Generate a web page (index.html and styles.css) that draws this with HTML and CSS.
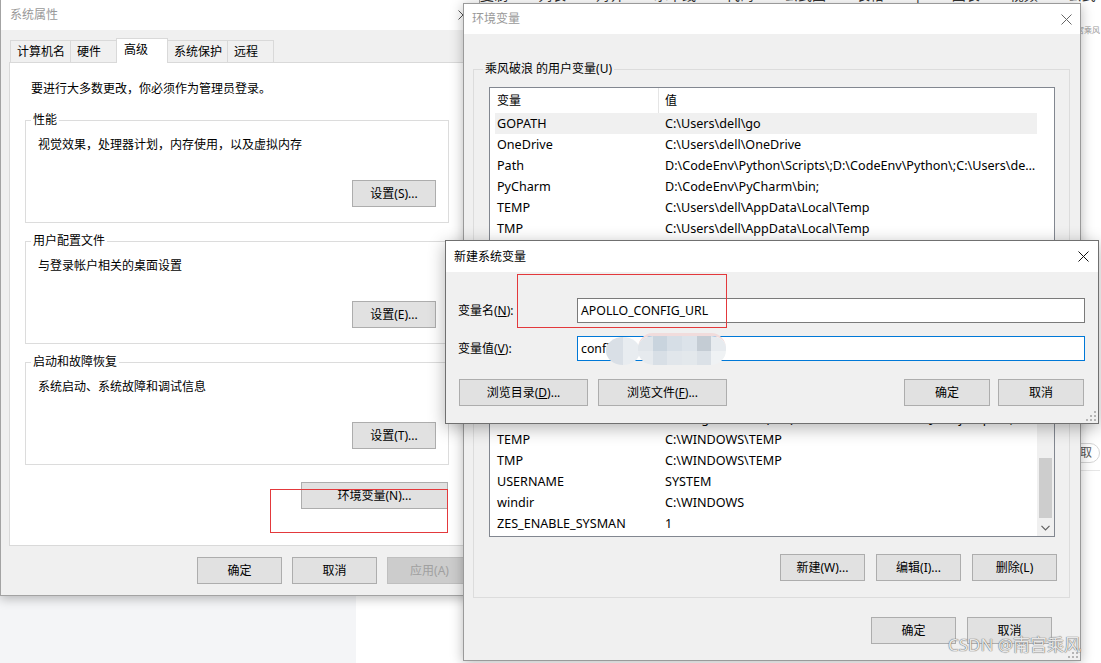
FILE: index.html
```html
<!DOCTYPE html>
<html lang="zh-CN">
<head>
<meta charset="utf-8">
<title>环境变量</title>
<link rel="stylesheet" href="styles.css">
</head>
<body>
<div class="desktop">
  <div class="backdrop-top">
    <span>复制</span><span>列表</span><span>对齐</span><span>水平线</span><span>代码</span><span>公式图</span><span>表格</span><span>|</span><span>图表</span><span>视频</span><span>公式</span><span>链接</span>
  </div>
  <div class="backdrop-bottom-left"></div>
  <div class="backdrop-right">
    <span class="mini-mark">南宫乘风</span>
    <span class="pill">获取</span>
    <span class="hr"></span>
  </div>

  <section class="win win-sys">
    <header class="titlebar inactive">
      <span class="title">系统属性</span>
      <span class="close"><svg width="10" height="10" viewBox="0 0 10 10"><path d="M0.5 0.5L9.5 9.5M9.5 0.5L0.5 9.5" stroke="#555" stroke-width="1" fill="none"/></svg></span>
    </header>
    <div class="sys-body">
      <nav class="tabs">
        <span class="tab">计算机名</span>
        <span class="tab">硬件</span>
        <span class="tab active">高级</span>
        <span class="tab">系统保护</span>
        <span class="tab">远程</span>
      </nav>
      <div class="tab-panel">
        <p class="note">要进行大多数更改，你必须作为管理员登录。</p>
        <fieldset class="sys-group">
          <legend>性能</legend>
          <div class="group-inner">
            <p class="desc">视觉效果，处理器计划，内存使用，以及虚拟内存</p>
            <button class="btn btn-set">设置(S)...</button>
          </div>
        </fieldset>
        <fieldset class="sys-group">
          <legend>用户配置文件</legend>
          <div class="group-inner">
            <p class="desc">与登录帐户相关的桌面设置</p>
            <button class="btn btn-set">设置(E)...</button>
          </div>
        </fieldset>
        <fieldset class="sys-group">
          <legend>启动和故障恢复</legend>
          <div class="group-inner">
            <p class="desc">系统启动、系统故障和调试信息</p>
            <button class="btn btn-set">设置(T)...</button>
          </div>
        </fieldset>
        <div class="env-row"><button class="btn btn-env">环境变量(N)...</button></div>
      </div>
      <div class="sys-footer">
        <button class="btn">确定</button>
        <button class="btn">取消</button>
        <button class="btn" disabled>应用(A)</button>
      </div>
    </div>
    <div class="mark-box mark-env"></div>
  </section>

  <section class="win win-env">
    <header class="titlebar inactive">
      <span class="title">环境变量</span>
      <span class="close"><svg width="11" height="11" viewBox="0 0 11 11"><path d="M0.5 0.5L10.5 10.5M10.5 0.5L0.5 10.5" stroke="#666" stroke-width="1" fill="none"/></svg></span>
    </header>
    <div class="env-body">
      <fieldset class="env-group">
        <legend>乘风破浪 的用户变量(U)</legend>
        <div class="group-inner">
          <div class="listbox user-list">
            <div class="list-main">
              <div class="list-head"><span class="c1">变量</span><span class="c2">值</span></div>
              <div class="list-body">
                <div class="row sel"><span class="c1">GOPATH</span><span class="c2">C:\Users\dell\go</span></div>
                <div class="row"><span class="c1">OneDrive</span><span class="c2">C:\Users\dell\OneDrive</span></div>
                <div class="row"><span class="c1">Path</span><span class="c2">D:\CodeEnv\Python\Scripts\;D:\CodeEnv\Python\;C:\Users\dell\AppData\Local\Microsoft\WindowsApps;</span></div>
                <div class="row"><span class="c1">PyCharm</span><span class="c2">D:\CodeEnv\PyCharm\bin;</span></div>
                <div class="row"><span class="c1">TEMP</span><span class="c2">C:\Users\dell\AppData\Local\Temp</span></div>
                <div class="row"><span class="c1">TMP</span><span class="c2">C:\Users\dell\AppData\Local\Temp</span></div>
              </div>
            </div>
            <div class="vscroll"></div>
          </div>
          <div class="btn-row">
            <button class="btn">新建(N)...</button>
            <button class="btn">编辑(E)...</button>
            <button class="btn">删除(D)</button>
          </div>
        </div>
      </fieldset>
      <fieldset class="env-group">
        <legend>系统变量(S)</legend>
        <div class="group-inner">
          <div class="listbox sys-list">
            <div class="list-main">
              <div class="list-head"><span class="c1">变量</span><span class="c2">值</span></div>
              <div class="list-body">
                <div class="row"><span class="c1">NUMBER_OF_PROCESSORS</span><span class="c2">8</span></div>
                <div class="row"><span class="c1">OS</span><span class="c2">Windows_NT</span></div>
                <div class="row"><span class="c1">Path</span><span class="c2">C:\Program Files (x86)\Common Files\Oracle\Java\javapath;C:\WINDOWS\system32;C:\WINDOWS;</span></div>
                <div class="row"><span class="c1">TEMP</span><span class="c2">C:\WINDOWS\TEMP</span></div>
                <div class="row"><span class="c1">TMP</span><span class="c2">C:\WINDOWS\TEMP</span></div>
                <div class="row"><span class="c1">USERNAME</span><span class="c2">SYSTEM</span></div>
                <div class="row"><span class="c1">windir</span><span class="c2">C:\WINDOWS</span></div>
                <div class="row"><span class="c1">ZES_ENABLE_SYSMAN</span><span class="c2">1</span></div>
              </div>
            </div>
            <div class="vscroll track">
              <span class="sb-space"></span>
              <span class="sb-thumb"></span>
              <span class="sb-arrow"><svg width="9" height="6" viewBox="0 0 9 6"><path d="M0.5 0.8L4.5 4.8L8.5 0.8" stroke="#606060" stroke-width="1.2" fill="none"/></svg></span>
            </div>
          </div>
          <div class="btn-row">
            <button class="btn">新建(W)...</button>
            <button class="btn">编辑(I)...</button>
            <button class="btn">删除(L)</button>
          </div>
        </div>
      </fieldset>
      <div class="env-footer">
        <button class="btn">确定</button>
        <button class="btn">取消</button>
      </div>
    </div>
    <svg class="grip" width="10" height="10" viewBox="0 0 10 10"><g fill="#b5b5b5"><rect x="8" y="0" width="2" height="2"/><rect x="4" y="4" width="2" height="2"/><rect x="8" y="4" width="2" height="2"/><rect x="0" y="8" width="2" height="2"/><rect x="4" y="8" width="2" height="2"/><rect x="8" y="8" width="2" height="2"/></g></svg>
  </section>

  <section class="win win-new">
    <header class="titlebar">
      <span class="title">新建系统变量</span>
      <span class="close"><svg width="11" height="11" viewBox="0 0 11 11"><path d="M0.5 0.5L10.5 10.5M10.5 0.5L0.5 10.5" stroke="#111" stroke-width="1" fill="none"/></svg></span>
    </header>
    <div class="new-body">
      <div class="field">
        <label>变量名(<u>N</u>):</label>
        <div class="input">APOLLO_CONFIG_URL</div>
      </div>
      <div class="field">
        <label>变量值(<u>V</u>):</label>
        <div class="input focus">confi</div>
      </div>
      <div class="dlg-buttons">
        <button class="btn btn-browse">浏览目录(<u>D</u>)...</button>
        <button class="btn btn-browse">浏览文件(<u>F</u>)...</button>
        <span class="spacer"></span>
        <span class="btn-pair">
          <button class="btn btn-dlg">确定</button>
          <button class="btn btn-dlg">取消</button>
        </span>
      </div>
    </div>
    <div class="mark-box mark-name"></div>
    <div class="blur blur-a"></div>
    <div class="blur blur-b">
      <i style="background:#e0e5ea"></i><i style="background:#c9d4de"></i><i style="background:#d6dee6"></i><i style="background:#dce3ea"></i><i style="background:#c4ccd4"></i><i style="background:#e7ebef"></i>
      <i style="background:#e6eaee"></i><i style="background:#d8dfe6"></i><i style="background:#e1e6eb"></i><i style="background:#e3e8ec"></i><i style="background:#dbe1e7"></i><i style="background:#eff2f4"></i>
    </div>
    <svg class="grip" width="10" height="10" viewBox="0 0 10 10"><g fill="#b5b5b5"><rect x="8" y="0" width="2" height="2"/><rect x="4" y="4" width="2" height="2"/><rect x="8" y="4" width="2" height="2"/><rect x="0" y="8" width="2" height="2"/><rect x="4" y="8" width="2" height="2"/><rect x="8" y="8" width="2" height="2"/></g></svg>
  </section>

  <div class="watermark">CSDN @南宫乘风</div>
</div>
</body>
</html>
```

FILE: styles.css
```css
* { box-sizing: border-box; }
html, body { margin: 0; padding: 0; background: #fff; }
body {
  font-family: "Noto Sans", "Noto Sans CJK SC", sans-serif;
  font-size: 12px;
  line-height: 16px;
  color: #000;
}
p { margin: 0; }
u { text-decoration: underline; text-underline-offset: 1px; }

.desktop {
  position: relative;
  width: 1101px;
  height: 663px;
  overflow: hidden;
  background: #fff;
}

/* ---------- backdrop ---------- */
.backdrop-top {
  position: absolute;
  left: 480px;
  top: -13px;
  display: flex;
  gap: 30px;
  font-size: 14px;
  color: #333;
  white-space: nowrap;
}
.backdrop-bottom-left {
  position: absolute;
  left: 0;
  top: 596px;
  width: 356px;
  height: 67px;
  background: #f4f5f7;
}
.backdrop-right {
  position: absolute;
  left: 1040px;
  top: 0;
  width: 61px;
  height: 663px;
  display: flex;
  flex-direction: column;
  align-items: flex-end;
  padding-right: 1px;
}
.mini-mark {
  margin-top: 25px;
  font-size: 8px;
  line-height: 10px;
  color: #999;
  white-space: nowrap;
}
.pill {
  margin-top: 408px;
  height: 20px;
  padding: 0 7px;
  border: 1px solid #d6d6d6;
  border-radius: 10px;
  display: flex;
  align-items: center;
  color: #555;
  white-space: nowrap;
}
.hr {
  margin-top: 7px;
  align-self: stretch;
  border-top: 1px solid #e6e6e6;
}

/* ---------- generic window ---------- */
.win {
  position: absolute;
  display: flex;
  flex-direction: column;
  background: #f0f0f0;
}
.titlebar {
  flex: none;
  display: flex;
  align-items: center;
  justify-content: space-between;
  background: #fff;
}
.title { white-space: nowrap; }
.inactive .title { color: #999; }
.close {
  display: flex;
  align-items: center;
  justify-content: center;
  flex: none;
}
.close svg { display: block; }

.btn {
  font: inherit;
  color: #000;
  width: 85px;
  height: 27px;
  padding: 0;
  background: #e1e1e1;
  border: 1px solid #adadad;
  border-radius: 0;
  display: flex;
  align-items: center;
  justify-content: center;
  white-space: nowrap;
  flex: none;
}
.btn:disabled {
  color: #a0a0a0;
  background: #cccccc;
  border-color: #bfbfbf;
}
.mark-box {
  position: absolute;
  border: 1px solid #e3393c;
  pointer-events: none;
}
.grip {
  position: absolute;
  right: 2px;
  bottom: 2px;
}

/* ---------- 系统属性 ---------- */
.win-sys {
  left: 0;
  top: -1px;
  width: 480px;
  height: 597px;
  border: 1px solid #a3a3a3;
  box-shadow: 0 3px 10px rgba(0, 0, 0, 0.25);
}
.win-sys .titlebar { height: 30px; padding-left: 9px; }
.win-sys .close { width: 32px; height: 30px; }
.sys-body {
  display: flex;
  flex-direction: column;
  padding: 8px 0 0 8px;
}
.tabs {
  display: flex;
  align-items: flex-end;
  height: 24px;
  padding-left: 1px;
}
.tab {
  height: 22px;
  min-width: 47px;
  padding: 0 5px 0 6px;
  margin-left: -1px;
  border: 1px solid #d9d9d9;
  border-bottom: 0;
  background: #f0f0f0;
  display: flex;
  align-items: center;
  white-space: nowrap;
}
.tab:first-child { margin-left: 0; }
.tab.active {
  height: 25px;
  min-width: 52px;
  padding: 3px 7px 0 7px;
  align-items: flex-start;
  background: #fff;
  margin-bottom: -1px;
  position: relative;
  z-index: 1;
}
.tab-panel {
  width: 462px;
  height: 484px;
  background: #fff;
  border: 1px solid #d9d9d9;
  padding: 18px 0 0 15px;
  display: flex;
  flex-direction: column;
  align-items: flex-start;
}
.note { margin-left: 6px; }
.sys-group {
  width: 424px;
  min-width: 0;
  margin: 15px 0 0;
  padding: 0;
  border: 1px solid #dcdcdc;
}
.sys-group + .sys-group { margin-top: 10px; }
.sys-group legend {
  margin-left: 5px;
  padding: 0 2px;
  line-height: 16px;
}
.group-inner {
  display: flex;
  flex-direction: column;
}
.sys-group .group-inner { padding: 9px 12px 15px 12px; }
.btn-set {
  align-self: flex-end;
  margin-top: 27px;
  width: 84px;
}
.env-row {
  width: 424px;
  display: flex;
  justify-content: flex-end;
  padding-right: 1px;
  margin-top: 17px;
}
.btn-env { width: 147px; }
.sys-footer {
  display: flex;
  gap: 10px;
  padding: 11px 0 0 188px;
}
.mark-env {
  left: 269px;
  top: 489px;
  width: 178px;
  height: 44px;
}

/* ---------- 环境变量 ---------- */
.win-env {
  left: 463px;
  top: 3px;
  width: 618px;
  height: 658px;
  border: 1px solid #9a9a9a;
  box-shadow: 0 2px 12px rgba(0, 0, 0, 0.28);
}
.win-env .titlebar { height: 30px; padding-left: 8px; }
.win-env .close { width: 28px; height: 30px; }
.env-body {
  display: flex;
  flex-direction: column;
  padding: 27px 0 0 9px;
}
.env-group {
  width: 597px;
  min-width: 0;
  margin: 0;
  padding: 0;
  border: 1px solid #dcdcdc;
}
.env-group + .env-group { margin-top: 9px; }
.env-group legend {
  margin-left: 9px;
  padding: 0 2px;
  line-height: 16px;
}
.env-group .group-inner { padding: 10px 13px 16px 15px; }
.listbox {
  display: flex;
  width: 566px;
  border: 1px solid #828790;
  background: #fff;
}
.user-list { height: 170px; }
.sys-list { height: 184px; }
.list-main {
  flex: 1;
  min-width: 0;
  display: flex;
  flex-direction: column;
  padding-left: 5px;
}
.list-head {
  flex: none;
  height: 25px;
  display: flex;
  align-items: stretch;
}
.list-head .c1,
.list-head .c2 { display: flex; align-items: center; }
.list-head .c1 { border-right: 1px solid #e5e5e5; }
.list-body {
  flex: 1;
  min-height: 0;
  overflow: hidden;
  display: flex;
  flex-direction: column;
}
.sys-list .list-body {
  justify-content: flex-end;
  padding-bottom: 2px;
}
.row {
  flex: none;
  height: 21px;
  display: flex;
  align-items: center;
  font-size: 12.6px;
}
.row.sel { background: #f0f0f0; }
.c1 {
  flex: none;
  width: 164px;
  padding-left: 2px;
  white-space: nowrap;
  overflow: hidden;
}
.c2 {
  flex: 1;
  min-width: 0;
  padding-left: 6px;
  white-space: nowrap;
  overflow: hidden;
  text-overflow: ellipsis;
}
.vscroll {
  flex: none;
  width: 17px;
  display: flex;
  flex-direction: column;
}
.vscroll.track { background: #f0f0f0; }
.sb-space { flex: 1; }
.sb-thumb {
  height: 60px;
  margin: 0 2px 1px;
  background: #cdcdcd;
}
.sb-arrow {
  height: 17px;
  display: flex;
  align-items: center;
  justify-content: center;
}
.btn-row {
  display: flex;
  justify-content: flex-end;
  gap: 11px;
  margin-top: 17px;
  margin-right: -1px;
}
.env-footer {
  display: flex;
  justify-content: flex-end;
  gap: 11px;
  margin-top: 19px;
  padding-right: 28px;
}

/* ---------- 新建系统变量 ---------- */
.win-new {
  left: 445px;
  top: 240px;
  width: 654px;
  height: 184px;
  border: 1px solid #707070;
  box-shadow: 0 4px 16px rgba(0, 0, 0, 0.3);
}
.win-new .titlebar { height: 31px; padding-left: 8px; }
.win-new .close { width: 30px; height: 31px; }
.new-body {
  flex: 1;
  display: flex;
  flex-direction: column;
  padding: 26px 13px 0 12px;
}
.field {
  display: flex;
  align-items: center;
}
.field + .field { margin-top: 13px; }
.field label {
  flex: none;
  width: 119px;
  white-space: nowrap;
}
.input {
  flex: 1;
  height: 25px;
  border: 1px solid #7a7a7a;
  background: #fff;
  padding-left: 3px;
  display: flex;
  align-items: center;
  white-space: nowrap;
  overflow: hidden;
  font-size: 12.3px;
}
.input.focus { border-color: #0078d7; }
.dlg-buttons {
  display: flex;
  gap: 10px;
  margin-top: 18px;
  padding-left: 1px;
}
.btn-browse { width: 129px; }
.spacer { flex: 1; }
.btn-pair { display: flex; gap: 8px; margin-right: 1px; }
.btn-dlg { width: 86px; }
.mark-name {
  left: 71px;
  top: 33px;
  width: 210px;
  height: 54px;
}
.blur {
  position: absolute;
  overflow: hidden;
}
.blur-a {
  left: 160px;
  top: 96px;
  width: 34px;
  height: 28px;
  border-radius: 50%;
  background: linear-gradient(90deg, #d9dfe6 50%, #e8ecf0 50%);
}
.blur-b {
  left: 192px;
  top: 92px;
  width: 88px;
  height: 32px;
  border-radius: 15px;
  border-top: 3px solid #f1dcdc;
  display: grid;
  grid-template-columns: repeat(6, 1fr);
  grid-template-rows: repeat(2, 1fr);
}
.blur-b i { display: block; }

.watermark {
  position: absolute;
  left: 948px;
  top: 635px;
  font-size: 17px;
  line-height: 20px;
  color: rgba(245, 245, 245, 0.92);
  text-shadow: 0 0 1px #666, 0 0 1px #666;
  white-space: nowrap;
}
```
